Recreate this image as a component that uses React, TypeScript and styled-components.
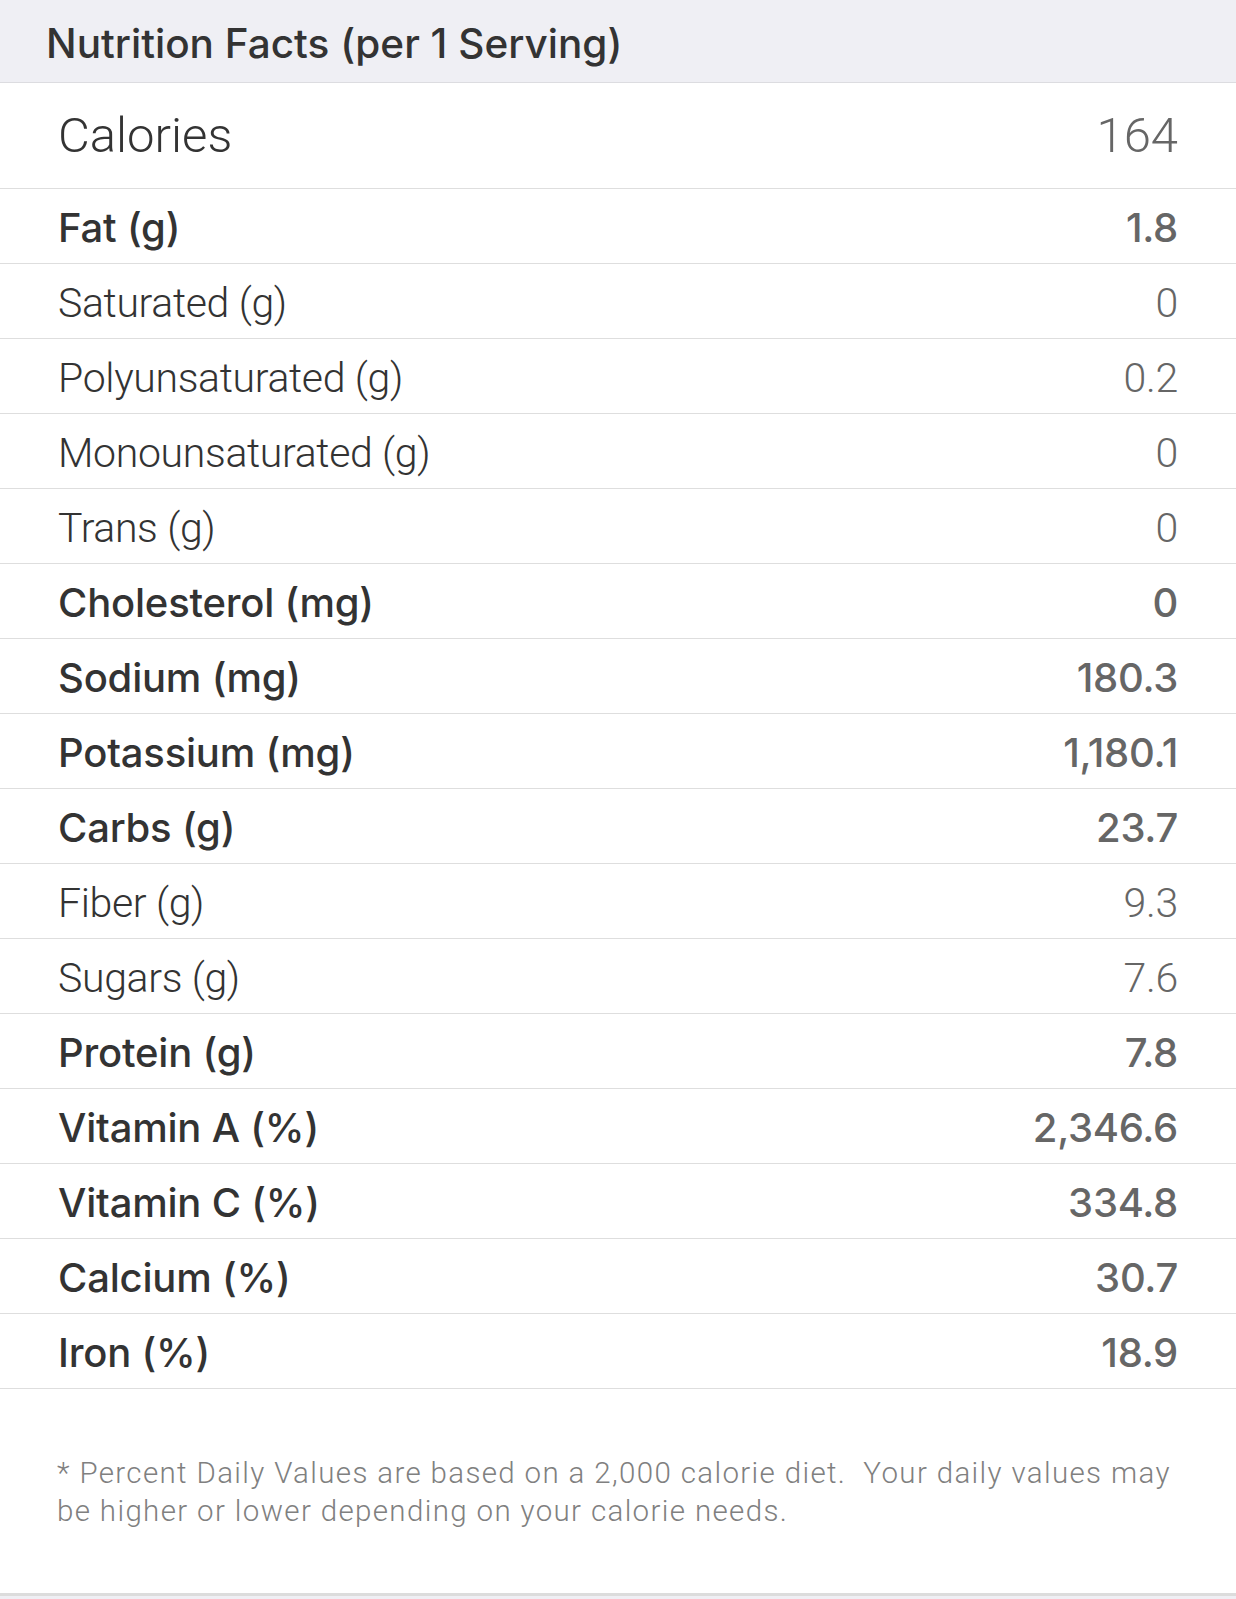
import styled, {createGlobalStyle} from "styled-components";

const GlobalStyle = createGlobalStyle`
  html, body {
    margin: 0;
    padding: 0;
    background: #ffffff;
  }
  body {
    font-family: Roboto, "Liberation Sans", Arial, sans-serif;
    -webkit-font-smoothing: antialiased;
  }
`

interface INutrient {
    label: string;
    value: string;
    bold: boolean;
}

const nutrients: INutrient[] = [
    {label: "Fat (g)", value: "1.8", bold: true},
    {label: "Saturated (g)", value: "0", bold: false},
    {label: "Polyunsaturated (g)", value: "0.2", bold: false},
    {label: "Monounsaturated (g)", value: "0", bold: false},
    {label: "Trans (g)", value: "0", bold: false},
    {label: "Cholesterol (mg)", value: "0", bold: true},
    {label: "Sodium (mg)", value: "180.3", bold: true},
    {label: "Potassium (mg)", value: "1,180.1", bold: true},
    {label: "Carbs (g)", value: "23.7", bold: true},
    {label: "Fiber (g)", value: "9.3", bold: false},
    {label: "Sugars (g)", value: "7.6", bold: false},
    {label: "Protein (g)", value: "7.8", bold: true},
    {label: "Vitamin A (%)", value: "2,346.6", bold: true},
    {label: "Vitamin C (%)", value: "334.8", bold: true},
    {label: "Calcium (%)", value: "30.7", bold: true},
    {label: "Iron (%)", value: "18.9", bold: true},
]

const Page = styled.div`
  width: 100%;
  min-height: 1599px;
  display: flex;
  flex-direction: column;
  background: #ffffff;
`

const Header = styled.div`
  height: 82px;
  background: #efeff4;
  border-bottom: 1px solid #dcdce0;
  display: flex;
  align-items: center;
  padding-left: 46px;
  box-sizing: content-box;
`

const HeaderTitle = styled.h1`
  margin: 0;
  padding-top: 4px;
  font-family: Inter, Roboto, sans-serif;
  font-size: 40.5px;
  font-weight: 500;
  color: #333333;
  letter-spacing: 0;
`

const Row = styled.div<{ $tall?: boolean }>`
  height: ${p => p.$tall ? 105 : 74}px;
  border-bottom: 1px solid #dedede;
  display: flex;
  align-items: center;
  justify-content: space-between;
  padding: 0 58px;
`

const Label = styled.span<{ $bold: boolean }>`
  font-family: ${p => p.$bold ? "Inter, Roboto, sans-serif" : "Roboto, sans-serif"};
  font-size: ${p => p.$bold ? 40 : 41}px;
  font-weight: ${p => p.$bold ? 500 : 300};
  letter-spacing: ${p => p.$bold ? "-0.2px" : "-0.35px"};
  color: #333333;
  padding-top: 3px;
`

const Value = styled.span<{ $bold: boolean }>`
  font-family: ${p => p.$bold ? "Inter, Roboto, sans-serif" : "Roboto, sans-serif"};
  font-size: ${p => p.$bold ? 40 : 41}px;
  font-weight: ${p => p.$bold ? 500 : 300};
  letter-spacing: -0.3px;
  color: #666666;
  padding-top: 3px;
`

const CaloriesLabel = styled.span`
  font-size: 49px;
  font-weight: 300;
  color: #333333;
`

const CaloriesValue = styled.span`
  font-size: 49px;
  font-weight: 300;
  color: #666666;
`

const Footer = styled.div`
  flex: 1;
  padding: 65px 58px 0 57px;
  font-size: 29.5px;
  line-height: 38px;
  font-weight: 300;
  letter-spacing: 1.35px;
  color: #808080;
`

const BottomBar = styled.div`
  height: 3px;
  border-top: 3px solid #dcdcdc;
  background: #efeff4;
`

const App = () => {
    return (
        <>
            <GlobalStyle/>
            <Page>
                <Header>
                    <HeaderTitle>Nutrition Facts (per 1 Serving)</HeaderTitle>
                </Header>
                <Row $tall>
                    <CaloriesLabel>Calories</CaloriesLabel>
                    <CaloriesValue>164</CaloriesValue>
                </Row>
                {nutrients.map((item, index) => (
                    <Row key={index}>
                        <Label $bold={item.bold}>{item.label}</Label>
                        <Value $bold={item.bold}>{item.value}</Value>
                    </Row>
                ))}
                <Footer>
                    * Percent Daily Values are based on a 2,000 calorie diet.&nbsp; Your daily values may be higher or lower depending on your calorie needs.
                </Footer>
                <BottomBar/>
            </Page>
        </>
    )
}

export default App;
